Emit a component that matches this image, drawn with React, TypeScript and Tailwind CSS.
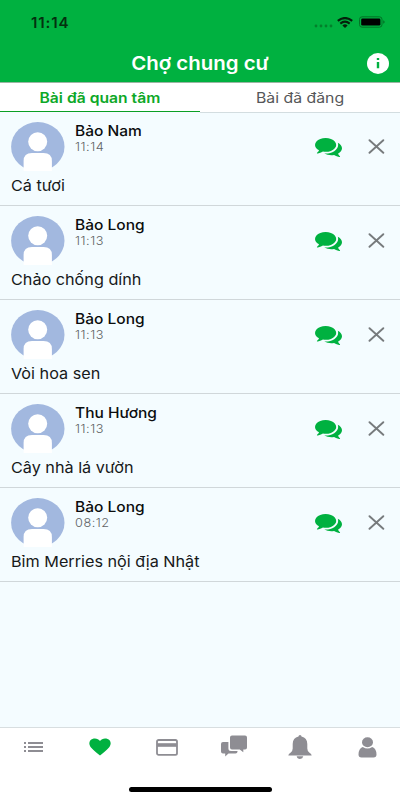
import type { ReactNode } from "react";
import clsx from "clsx";

interface Post {
  id: number;
  author: string;
  time: string;
  title: string;
}

const POSTS: Post[] = [
  { id: 1, author: "Bảo Nam", time: "11:14", title: "Cá tươi" },
  { id: 2, author: "Bảo Long", time: "11:13", title: "Chảo chống dính" },
  { id: 3, author: "Bảo Long", time: "11:13", title: "Vòi hoa sen" },
  { id: 4, author: "Thu Hương", time: "11:13", title: "Cây nhà lá vườn" },
  { id: 5, author: "Bảo Long", time: "08:12", title: "Bỉm Merries nội địa Nhật" },
];

function StatusBar() {
  return (
    <div className="flex h-[44px] items-center justify-between pr-[15px] pl-[31px]">
      <span className="mt-[2px] origin-left scale-x-[1.08] text-[14px] leading-5 font-semibold tracking-[0.8px] text-[#04300f]">
        11:14
      </span>
      <div className="flex items-center">
        <svg className="mt-[8px] mr-[4px] h-[4px] w-[19px]" viewBox="0 0 19 4" fill="#03802b">
          <circle cx="2" cy="2" r="1.4" />
          <circle cx="7" cy="2" r="1.4" />
          <circle cx="12" cy="2" r="1.4" />
          <circle cx="17" cy="2" r="1.4" />
        </svg>
        <svg className="mr-[6px] h-[11px] w-[16px]" viewBox="0 0 16 11" fill="none" stroke="#04200b">
          <path d="M.8 3.800Q8-1.700 15.200 3.800" strokeWidth="2.200" />
          <path d="M3.300 6.600Q8 2.700 12.700 6.600" strokeWidth="2.100" />
          <path d="M5.400 8.400Q8 6.300 10.600 8.400L8 10.900Z" fill="#04200b" stroke="none" />
        </svg>
        <svg className="h-[12px] w-[26px]" viewBox="0 0 26 12">
          <rect x=".5" y=".8" width="22.500" height="10.400" rx="2.600" fill="none" stroke="#027226" />
          <rect x="2.200" y="2.400" width="19.200" height="7.200" rx="1.300" fill="#000" />
          <path d="M24.200 4.200Q25.700 5 25.700 6T24.200 7.800Z" fill="#027226" />
        </svg>
      </div>
    </div>
  );
}

function Avatar() {
  return (
    <svg className="h-[49px] w-[54px] shrink-0" viewBox="0 0 54 49" preserveAspectRatio="none">
      <ellipse cx="26.800" cy="24.700" rx="26.700" ry="24.600" fill="#a2b8df" />
      <circle cx="26.700" cy="19.800" r="9.500" fill="#fff" />
      <path d="M12.600 49V39Q12.600 31 21 31H32.500Q40.900 31 40.900 39V49Z" fill="#fff" />
    </svg>
  );
}

function CommentsIcon() {
  return (
    <svg className="h-[19px] w-[27px]" viewBox="0 256 1792 1410" preserveAspectRatio="none" fill="#00b140">
      <path d="M1408 768q0 139-94 257t-256.500 186.500-353.500 68.500q-86 0-176-16-124 88-278 128-36 9-86 16h-3q-11 0-20.500-8t-11.500-21q-1-3-1-6.500t.5-6.500 2-6l2.500-5 3.500-5.500 4-5 4.500-5 4-4.500q5-6 23-25t26-29.500 22.500-29 25-38.500 20.500-44q-124-72-195-177t-71-224q0-139 94-257t256.500-186.500 353.500-68.500 353.500 68.500 256.500 186.500 94 257zm384 256q0 120-71 224.500t-195 176.500q10 24 20.500 44t25 38.500 22.500 29 26 29.500 23 25q1 1 4 4.500t4.500 5 4 5 3.500 5.500l2.500 5 2 6 .5 6.500-1 6.500q-3 14-13 22t-22 7q-50-7-86-16-154-40-278-128-90 16-176 16-271 0-472-132 58 4 88 4 161 0 309-45t264-129q125-92 192-212t67-254q0-77-23-152 129 71 204 178t75 230z" />
    </svg>
  );
}

function PostRow({ post }: { post: Post }) {
  return (
    <li className="h-[94px] border-b border-[#d0d7da] px-[10.5px] pt-[10px]">
      <div className="flex h-[49px]">
        <Avatar />
        <div className="ml-[10px] flex flex-1 flex-col items-start">
          <span className="origin-left scale-x-[1.07] text-[14.5px] leading-[18px] font-medium whitespace-nowrap text-[#0b0d0e]">
            {post.author}
          </span>
          <span className="mt-[-1px] origin-left scale-x-[1.06] text-[12px] leading-4 font-light tracking-[0.5px] text-[#606365]">
            {post.time}
          </span>
        </div>
        <button className="mt-[16px] h-[19px]" aria-label="Chat">
          <CommentsIcon />
        </button>
        <button className="mt-[17px] mr-[5px] ml-[26px] h-[15px]" aria-label="Remove">
          <svg
            className="h-[15px] w-[17px]"
            viewBox="0 0 17 15"
            fill="none"
            stroke="#777b7d"
            strokeWidth="1.9"
            strokeLinecap="round"
          >
            <path d="M1.500 1.200 15.300 13.800M15.300 1.200 1.500 13.800" />
          </svg>
        </button>
      </div>
      <p className="mt-[4px] w-max origin-left scale-x-[1.08] text-[15px] leading-[22px] text-[#17191a]">{post.title}</p>
    </li>
  );
}

function NavItem({ label, children }: { label: string; children: ReactNode }) {
  return (
    <button className="flex h-[38px] items-center justify-center text-[#8e8d93]" aria-label={label}>
      {children}
    </button>
  );
}

function BottomNav() {
  return (
    <nav className="h-[73px] border-t border-[#d8dee0] bg-white">
      <div className="grid grid-cols-6">
        <NavItem label="Posts">
          <svg className="h-[12px] w-[19px]" viewBox="0 0 19 12" fill="currentColor">
            <path d="M0 1h2v2H0zM4 1h15v2H4zM0 5h2v2H0zM4 5h15v2H4zM0 9h2v2H0zM4 9h15v2H4z" />
          </svg>
        </NavItem>
        <NavItem label="Market">
          <svg className="h-[18px] w-[22px]" viewBox="0 0 22 19" preserveAspectRatio="none" fill="#00b140">
            <path d="M11 18.500C9 16.500 4.500 13.300 2 10 0 7.400-.2 4.500 1.400 2.500 3.800-.4 9-.2 11 3.200 13-.2 18.200-.4 20.600 2.500 22.200 4.500 22 7.400 20 10 17.500 13.300 13 16.500 11 18.500Z" />
          </svg>
        </NavItem>
        <NavItem label="Payments">
          <svg className="h-[17px] w-[22px]" viewBox="0 0 22 17">
            <rect x="1" y="1" width="20" height="14.8" rx="1.6" fill="none" stroke="currentColor" strokeWidth="1.8" />
            <path d="M1 4.200h20V7.800H1z" fill="currentColor" />
          </svg>
        </NavItem>
        <NavItem label="Messages">
          <svg className="mt-[-2px] ml-[1px] h-[22px] w-[26px]" viewBox="0 0 26 22" fill="currentColor">
            <path d="M11 .5H24Q26 .5 26 2.500V12.500Q26 14.500 24 14.500H22.300V17.300L18.700 14.500H11Q9 14.500 9 12.500V2.500Q9 .5 11 .5Z" />
            <path d="M7.400 7H2Q0 7 0 9V16.500Q0 18.500 2 18.500H4.200V21.500L7.500 18.500H14.500Q16.500 18.500 16.500 16.500V16H10Q7.400 16 7.400 13.500Z" />
          </svg>
        </NavItem>
        <NavItem label="Notifications">
          <svg className="h-[24px] w-[24px]" viewBox="0 0 24 24" fill="currentColor">
            <path d="M12 0Q13.500.1 13.500 1.600C17.300 2.500 19.300 5 19.300 9V13.500Q19.300 16.300 21.500 17.700 23.500 19 23.700 20.500H.3Q.5 19 2.500 17.700 4.700 16.300 4.700 13.500V9C4.700 5 6.700 2.500 10.500 1.600Q10.500.1 12 0ZM8.700 21.300H15.300Q14.800 23.900 12 23.900T8.700 21.300Z" />
          </svg>
        </NavItem>
        <NavItem label="Account">
          <svg className="ml-[1px] h-[21px] w-[19px]" viewBox="0 0 19 21" fill="currentColor">
            <ellipse cx="9.5" cy="5.2" rx="5.5" ry="5" />
            <path d="M4.800 9.900Q9.500 13 14.200 9.900Q18.500 11.500 18.500 17.500 18.500 20.500 15.500 20.500H3.500Q.5 20.500 .5 17.500 .5 11.500 4.800 9.900Z" />
          </svg>
        </NavItem>
      </div>
      <div className="mx-auto mt-[21px] h-[5px] w-[143px] rounded-full bg-black" />
    </nav>
  );
}

export default function App() {
  const tabs = ["Bài đã quan tâm", "Bài đã đăng"];
  const activeTab = 0;

  return (
    <div className="flex h-[800px] w-[400px] flex-col overflow-hidden bg-[#f4fcff] font-['Inter','Noto_Sans',sans-serif]">
      <header className="h-[82px] shrink-0 bg-[#00b140]">
        <StatusBar />
        <div className="grid h-[38px] grid-cols-[1fr_auto_1fr] items-center">
          <h1 className="col-start-2 mt-[2px] scale-x-[1.075] text-[19px] leading-6 font-semibold text-white">
            Chợ chung cư
          </h1>
          <svg className="mr-[11px] h-[21px] w-[22px] justify-self-end" viewBox="0 0 22 21">
            <ellipse cx="11" cy="10.5" rx="11" ry="10.4" fill="#fff" />
            <path d="M9.800 5.100h2.400v2H9.800zM9.800 8.900h2.400v6.300H9.800z" fill="#00b140" />
          </svg>
        </div>
      </header>

      <div className="grid h-[30px] shrink-0 grid-cols-2 border-t border-[#9bb5a3] bg-white">
        {tabs.map((tab, i) => (
          <button
            key={tab}
            className={clsx(
              "flex items-center justify-center border-b text-[14px]",
              i === activeTab
                ? "border-[#0b9f24] font-semibold text-[#0da827]"
                : "-mb-px border-[#d3dde0] text-[#555759]",
            )}
          >
            <span className={i === activeTab ? "scale-x-[1.12]" : "scale-x-[1.13]"}>{tab}</span>
          </button>
        ))}
      </div>

      <ul className="flex-1">
        {POSTS.map((post) => (
          <PostRow key={post.id} post={post} />
        ))}
      </ul>

      <BottomNav />
    </div>
  );
}
